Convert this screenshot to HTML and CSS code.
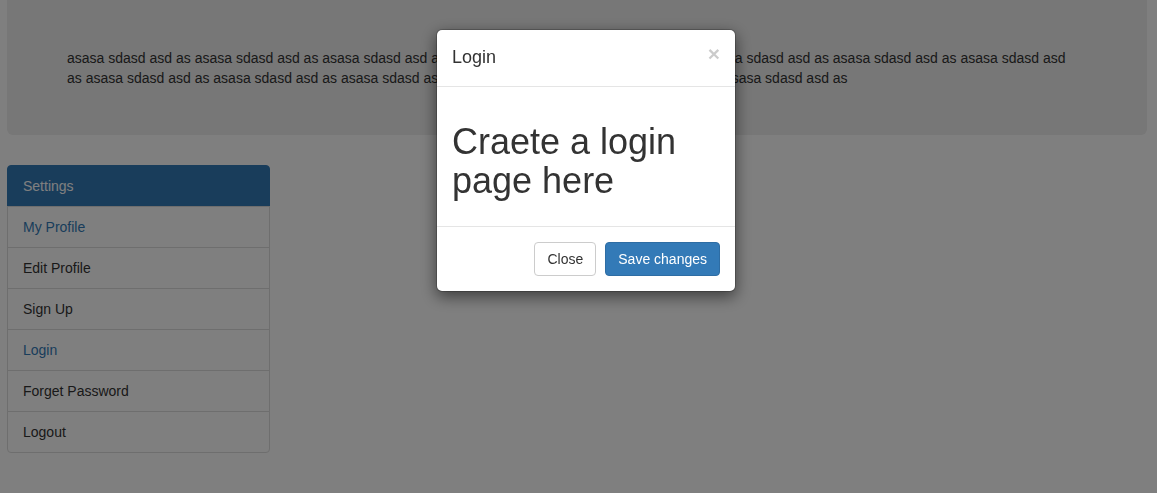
FILE: index.html
```html
<!DOCTYPE html>
<html>
<head>
<meta charset="utf-8">
<title>Login modal</title>
<link rel="stylesheet" href="styles.css">
</head>
<body>
<div class="page">
  <div class="jumbotron">
    <div class="lead-text">asasa sdasd asd as asasa sdasd asd as asasa sdasd asd as asasa sdasd asd as asasa sdasd asd as asasa sdasd asd as asasa sdasd asd as asasa sdasd asd as asasa sdasd asd as asasa sdasd asd as asasa sdasd asd as asasa sdasd asd as asasa sdasd asd as asasa sdasd asd as</div>
  </div>
  <div class="sidebar">
    <div class="list-group">
      <div class="list-item active">Settings</div>
      <a class="list-item link" href="#">My Profile</a>
      <div class="list-item">Edit Profile</div>
      <div class="list-item">Sign Up</div>
      <a class="list-item link" href="#">Login</a>
      <div class="list-item">Forget Password</div>
      <div class="list-item">Logout</div>
    </div>
  </div>
</div>

<div class="backdrop"></div>
<div class="modal">
  <div class="modal-dialog">
    <div class="modal-header">
      <h4 class="modal-title">Login</h4>
      <button class="close" type="button">&times;</button>
    </div>
    <div class="modal-body">
      <h1 class="modal-heading">Craete a login page here</h1>
    </div>
    <div class="modal-footer">
      <button class="btn btn-default" type="button">Close</button>
      <button class="btn btn-primary" type="button">Save changes</button>
    </div>
  </div>
</div>
</body>
</html>
```

FILE: styles.css
```css
* { box-sizing: border-box; }

html, body {
  margin: 0;
  padding: 0;
  height: 100%;
}

body {
  font-family: "Liberation Sans", Arial, Helvetica, sans-serif;
  font-size: 14px;
  line-height: 20px;
  color: #333;
  background: #fff;
  overflow: hidden;
}

.page {
  padding: 0 10px 0 7px;
}

.jumbotron {
  width: 1140px;
  background: #eee;
  border-radius: 0 0 6px 6px;
  padding: 48px 60px 47px;
  margin-bottom: 30px;
}

.lead-text {
  max-width: 1012px;
}

.sidebar {
  width: 263px;
}

.list-group {
  display: flex;
  flex-direction: column;
}

.list-item {
  display: block;
  padding: 10px 15px;
  background: #fff;
  border: 1px solid #ddd;
  margin-bottom: -1px;
  color: #333;
  text-decoration: none;
}

.list-item.link {
  color: #337ab7;
}

.list-item.active {
  background: #337ab7;
  border-color: #337ab7;
  color: #fff;
  border-radius: 4px 4px 0 0;
}

.list-item:last-child {
  border-radius: 0 0 4px 4px;
  margin-bottom: 0;
}

.backdrop {
  position: fixed;
  inset: 0;
  background: rgba(0, 0, 0, 0.5);
}

.modal {
  position: fixed;
  inset: 0;
}

.modal-dialog {
  width: 300px;
  margin: 29px 0 0 436px;
  background: #fff;
  border: 1px solid rgba(0, 0, 0, 0.2);
  border-radius: 6px;
  box-shadow: 0 5px 15px rgba(0, 0, 0, 0.5);
  background-clip: padding-box;
}

.modal-header {
  display: flex;
  justify-content: space-between;
  align-items: flex-start;
  padding: 15px;
  border-bottom: 1px solid #e5e5e5;
}

.modal-title {
  margin: 0;
  font-size: 18px;
  font-weight: 500;
  line-height: 25.7px;
  color: #333;
}

.close {
  padding: 0;
  margin-top: -2px;
  border: 0;
  background: transparent;
  font-family: "Liberation Sans", Arial, sans-serif;
  font-size: 21px;
  font-weight: 700;
  line-height: 1;
  color: #000;
  opacity: 0.2;
  text-shadow: 0 1px 0 #fff;
  cursor: pointer;
}

.modal-body {
  padding: 15px;
}

.modal-heading {
  margin: 20px 0 10px;
  font-size: 36px;
  font-weight: 500;
  line-height: 39.6px;
  color: #333;
}

.modal-footer {
  display: flex;
  justify-content: flex-end;
  gap: 9px;
  padding: 15px;
  border-top: 1px solid #e5e5e5;
}

.btn {
  display: inline-block;
  padding: 6px 12px;
  font-family: "Liberation Sans", Arial, sans-serif;
  font-size: 14px;
  line-height: 20px;
  border: 1px solid transparent;
  border-radius: 4px;
  cursor: pointer;
}

.btn-default {
  color: #333;
  background: #fff;
  border-color: #ccc;
}

.btn-primary {
  color: #fff;
  background: #337ab7;
  border-color: #2e6da4;
}
```
